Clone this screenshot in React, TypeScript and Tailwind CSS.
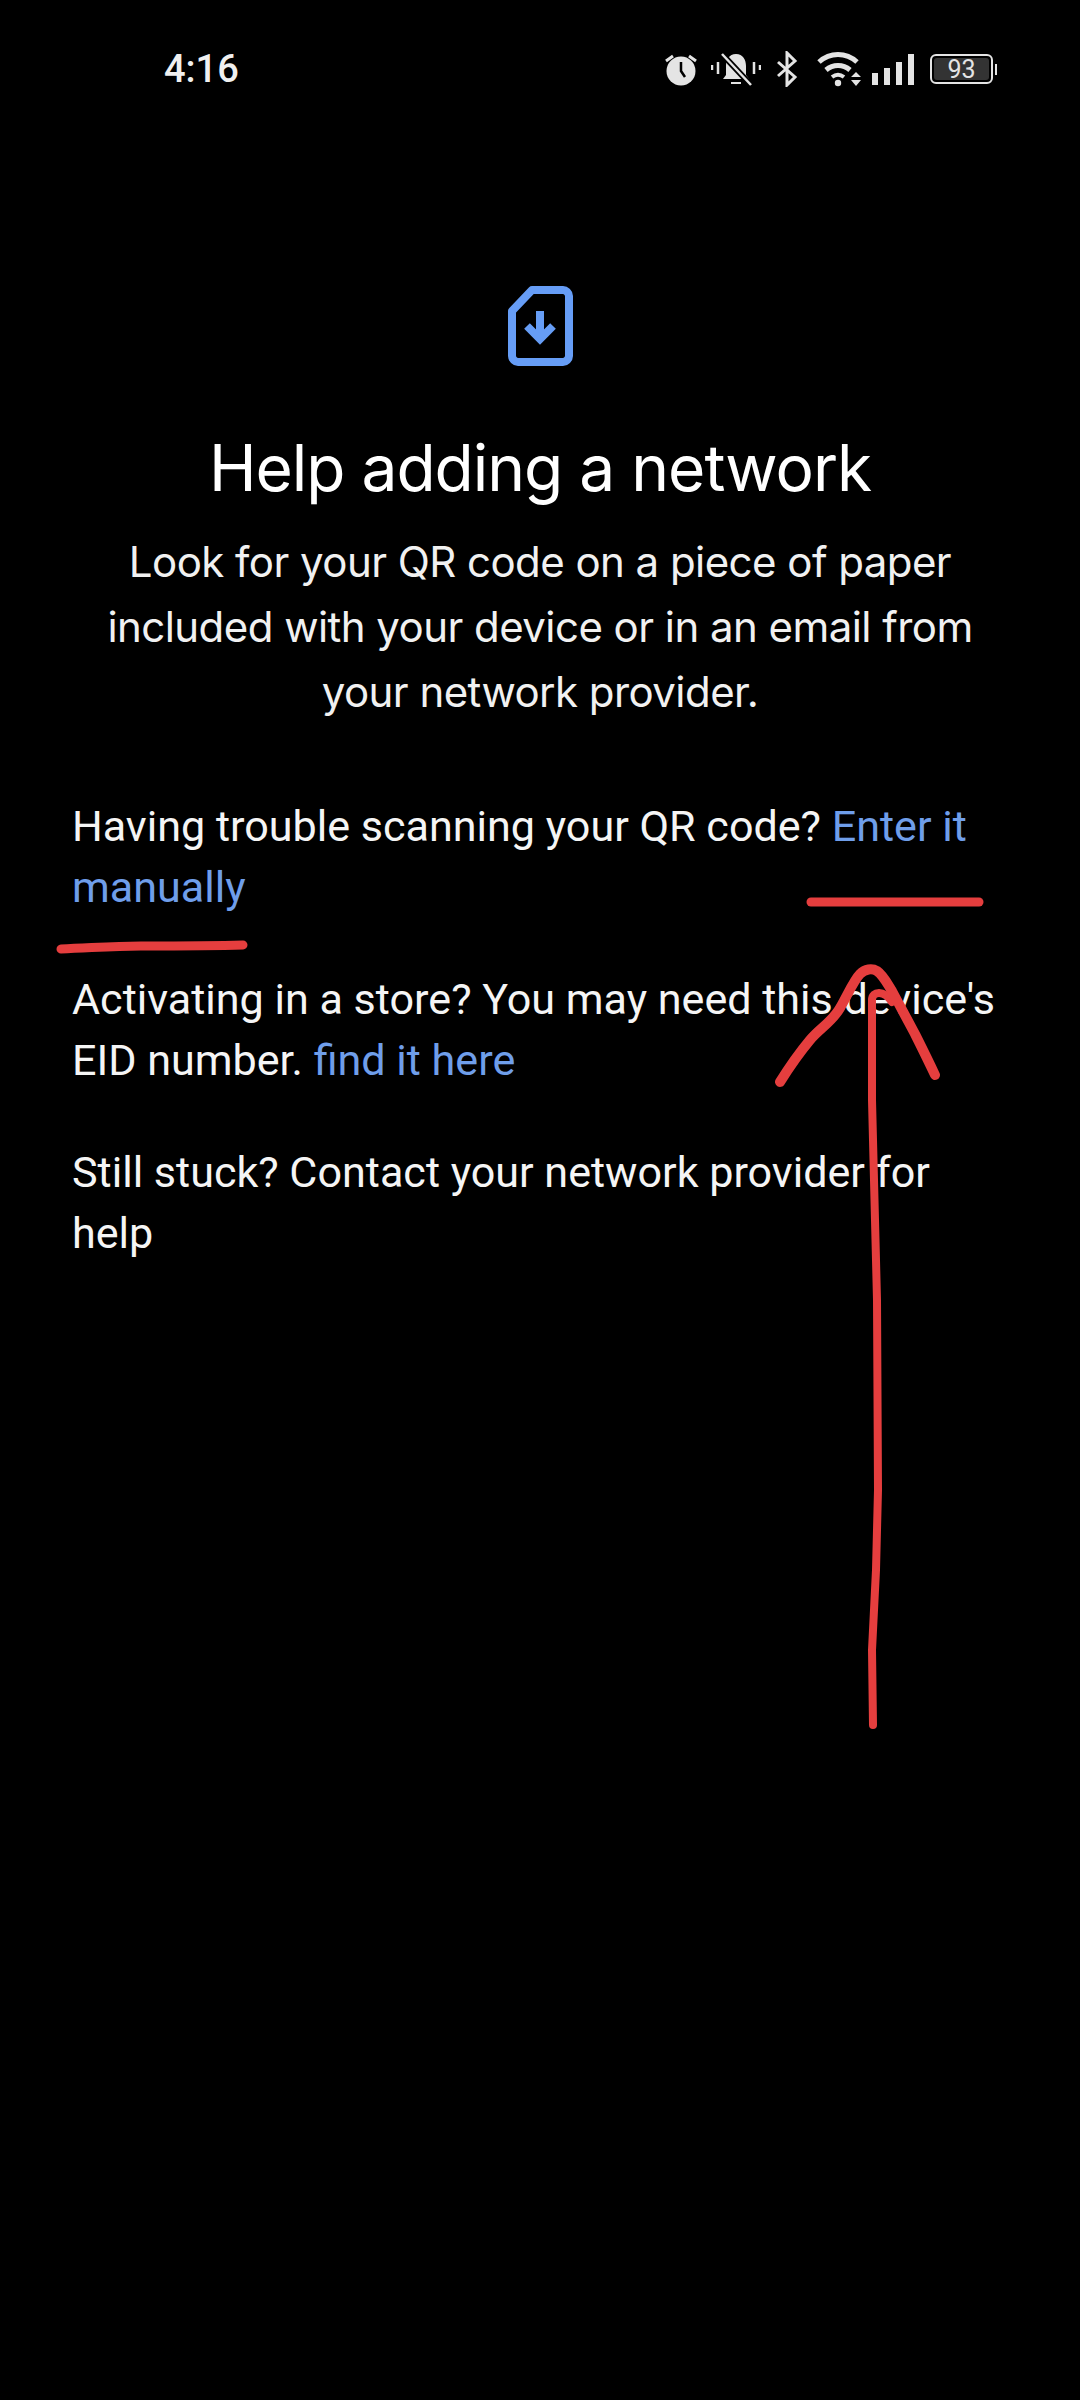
function StatusIcons() {
    return (
        <div className="flex items-center text-[#e4e4e4]">
            <svg width="34" height="34" viewBox="0 0 34 34">
                <circle cx="17" cy="19" r="14.5" fill="currentColor" />
                <path d="M17 10v9l4 6" fill="none" stroke="#000" strokeWidth="2.5" />
                <path d="M2 9l7-5M32 9l-7-5" stroke="currentColor" strokeWidth="3" />
            </svg>
            <svg width="50" height="36" viewBox="0 0 50 36" className="ml-[13px]">
                <path d="M25 3c-7 0-10 6-10 12v9l-3 4h26l-3-4v-9c0-6-3-12-10-12z" fill="currentColor" />
                <path d="M20 31h10v2H20z" fill="currentColor" />
                <path d="M11 3l29 31" stroke="#000" strokeWidth="6" />
                <path d="M11 3l29 31" stroke="currentColor" strokeWidth="2.5" />
                <path d="M1 14v5M7 11v12M43 11v12M49 14v5" stroke="currentColor" strokeWidth="2.5" />
            </svg>
            <svg width="22" height="36" viewBox="0 0 22 36" fill="none" stroke="currentColor" strokeWidth="3" className="ml-[15px]">
                <path d="M2 11l17 15-8 8V2l8 8L2 25" />
            </svg>
            <svg width="46" height="36" viewBox="0 0 46 36" className="ml-[19px]">
                <path d="M2 11c11-10 27-10 38 0" fill="none" stroke="currentColor" strokeWidth="5" />
                <path d="M9 19c7-6 17-6 24 0" fill="none" stroke="currentColor" strokeWidth="5" />
                <path d="M15 26c4-3 8-3 12 0" fill="none" stroke="currentColor" strokeWidth="4" />
                <circle cx="21" cy="32" r="3.2" fill="currentColor" />
                <path d="M34 26h10l-5-5zM34 29h10l-5 6z" fill="currentColor" />
            </svg>
            <svg width="46" height="32" viewBox="0 0 46 32" className="ml-[8px]">
                <rect x="1" y="20" width="6" height="12" fill="currentColor" />
                <rect x="13" y="15" width="6" height="17" fill="currentColor" />
                <rect x="25" y="9" width="6" height="23" fill="currentColor" />
                <rect x="37" y="1" width="6" height="31" fill="currentColor" />
            </svg>
            <div className="ml-[13px] flex items-center">
                <div className="flex h-[30px] w-[63px] items-center justify-center rounded-[6px] border-2 border-[#e4e4e4] text-[25px] leading-none">
                    <span className="flex h-[22px] w-[55px] items-center justify-center rounded-[3px] bg-[#333333]">93</span>
                </div>
                <div className="ml-[2px] h-[11px] w-[2px] bg-[#e4e4e4]" />
            </div>
        </div>
    )
}

function Markup() {
    return (
        <svg width="1080" height="2400" viewBox="0 0 1080 2400" className="absolute left-0 top-0" fill="none" stroke="#e53e3e" strokeWidth="9" strokeLinecap="round" strokeLinejoin="round">
            <path d="M811 902h168" />
            <path d="M61 949c30-1 50-3 80-3s70 0 102-1" />
            <path strokeWidth="8" d="M873 1725L872 1650 876 1570 878 1490 877 1300 872 1100 872 1000C872 995 875 993 879 993 884 993 888 996 892 1002" />
            <path strokeWidth="10" d="M780 1082C790 1066 800 1052 810 1040 820 1028 832 1022 840 1008 848 994 854 980 860 974 865 969 872 968 877 971 883 975 887 983 892 991L915 1034C922 1048 928 1060 935 1075" />
        </svg>
    )
}

function App() {
    return (
        <div className="relative h-[2400px] w-[1080px] overflow-hidden bg-black font-['Roboto',sans-serif] text-white">
            <div className="flex h-[138px] items-center justify-between pl-[164px] pr-[83px]">
                <span className="text-[38px] font-medium leading-none text-[#f0f0f0]">4:16</span>
                <StatusIcons />
            </div>

            <div className="flex flex-col items-center pt-[148px]">
                <svg width="66" height="80" viewBox="0 0 66 80" fill="none" className="text-[#669df6]">
                    <path d="M5 25L25 4h31c3 0 6 3 6 6v60c0 3-3 6-6 6H11c-3 0-6-3-6-6z" stroke="currentColor" strokeWidth="8" strokeLinejoin="round" />
                    <path d="M33 25v24" stroke="currentColor" strokeWidth="8" />
                    <path d="M20 40l13 13 13-13" stroke="currentColor" strokeWidth="8" />
                </svg>
                <h1 className="mt-[62px] font-['Inter',sans-serif] text-[64px] leading-[80px] tracking-[-1px]">Help adding a network</h1>
                <p className="mt-[21px] w-[900px] text-center font-['Inter',sans-serif] text-[42px] leading-[65px] tracking-[-0.55px] text-[#f1f1f1]">
                    Look for your QR code on a piece of paper included with your device or in an email from your network provider.
                </p>
            </div>

            <div className="flex flex-col gap-[51px] pl-[72px] pr-[30px] pt-[72px] text-[43.1px] leading-[61px] text-[#f5f5f5]">
                <p>Having trouble scanning your QR code? <span className="text-[#6f9eea]">Enter it manually</span></p>
                <p>Activating in a store? You may need this device's EID number. <span className="text-[#6f9eea]">find it here</span></p>
                <p className="w-[920px]">Still stuck? Contact your network provider for help</p>
            </div>

            <Markup />
        </div>
    )
}
export default App
